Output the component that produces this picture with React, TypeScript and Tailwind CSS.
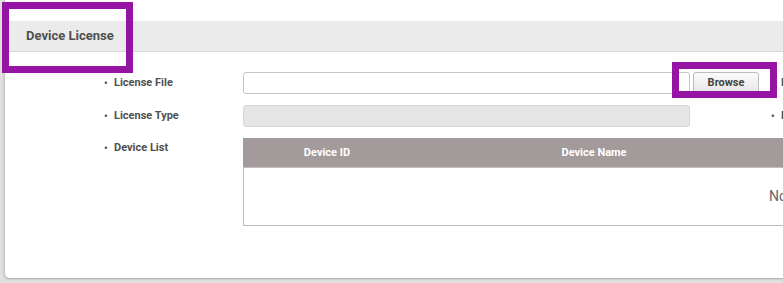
import React from "react";

function Label({ text }: { text: string }) {
  return (
    <div className="flex items-center h-[22px] pl-[99px] text-[11px] font-bold text-[#505050] whitespace-nowrap shrink-0">
      <span className="w-[10px] shrink-0 text-[10px] text-[#555]">•</span>
      <span>{text}</span>
    </div>
  );
}

export default function App() {
  return (
    <div
      className="relative w-[783px] h-[283px] overflow-hidden bg-[#e2e0df]"
      style={{ fontFamily: "Roboto, 'Liberation Sans', sans-serif" }}
    >
      <div className="ml-[4px] w-[1100px] h-[278px] bg-white border-l border-[#c8c8c8] rounded-bl-[5px] shadow-[0_1px_2px_rgba(0,0,0,0.25)] pt-[21px]">
        <div className="h-[31px] bg-[#ebebeb] border-b border-[#d8d8d8] flex items-center pl-[21px] text-[13px] font-bold text-[#505050]">
          Device License
        </div>
        <div className="pt-[20px] flex flex-col">
          {/* Row 1 */}
          <div className="flex items-start">
            <div className="w-[238px] shrink-0">
              <Label text="License File" />
            </div>
            <div className="w-[528px] shrink-0 flex">
              <div className="w-[447px] shrink-0 h-[22px] border border-[#c6c6c6] rounded-[3px] bg-white" />
              <button className="ml-[3px] w-[66px] shrink-0 h-[22px] flex items-center justify-center border border-[#bcbcbc] rounded-[3px] bg-gradient-to-b from-[#fbfbfb] to-[#e6e6e6] text-[11px] font-bold text-[#444]">
                Browse
              </button>
            </div>
            <div className="-ml-[99px] shrink-0">
              <Label text="License Version" />
            </div>
          </div>
          {/* Row 2 */}
          <div className="flex items-start mt-[11px]">
            <div className="w-[238px] shrink-0">
              <Label text="License Type" />
            </div>
            <div className="w-[528px] shrink-0 flex">
              <div className="w-[447px] shrink-0 h-[22px] border border-[#d6d6d6] rounded-[3px] bg-[#e6e6e6]" />
            </div>
            <div className="-ml-[99px] shrink-0">
              <Label text="License Date" />
            </div>
          </div>
          {/* Row 3 */}
          <div className="flex items-start mt-[11px]">
            <div className="w-[238px] shrink-0">
              <div className="-mt-[1px]">
                <Label text="Device List" />
              </div>
            </div>
            <div className="w-[800px] shrink-0">
              <div className="h-[30px] pt-[2px] bg-[#a39a9b] border-b border-[#c4bfbf] flex items-center text-[11px] font-bold text-white">
                <div className="w-[168px] shrink-0 text-center">Device ID</div>
                <div className="w-[366px] shrink-0 text-center">Device Name</div>
                <div className="flex-1 text-center">Status</div>
              </div>
              <div className="h-[58px] border-l border-b border-[#bdbdbd] flex items-center pl-[525px] text-[14px] text-[#666] whitespace-nowrap">
                No data available
              </div>
            </div>
          </div>
        </div>
      </div>
      <div className="absolute left-[2px] top-[2px] w-[131px] h-[71px] border-[7px] border-[#9514a3]" />
      <div className="absolute left-[672px] top-[62px] w-[105px] h-[36px] border-[7px] border-[#9514a3]" />
    </div>
  );
}
